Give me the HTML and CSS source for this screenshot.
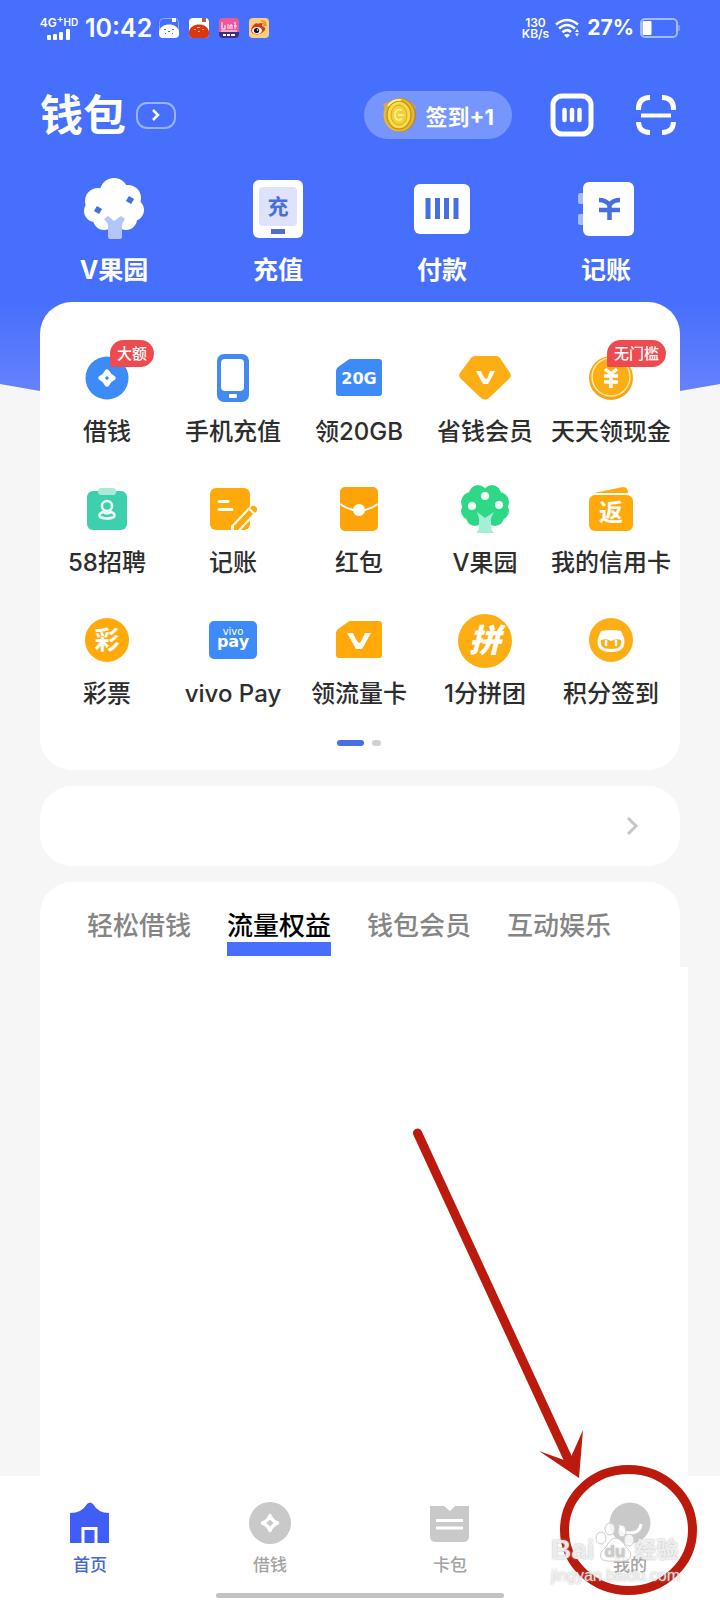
FILE: index.html
```html
<!DOCTYPE html>
<html lang="zh-CN">
<head>
<meta charset="utf-8">
<meta name="viewport" content="width=device-width, initial-scale=1">
<title>钱包</title>
<link rel="stylesheet" href="styles.css">
</head>
<body>
<div class="page">
  <div class="status">
    <div class="status-group">
      <div class="carrier">
        <span class="carrier-name">4G<sup>+</sup><small>HD</small></span>
        <svg width="24" height="11" viewBox="0 0 24 11" fill="#fff"><rect y="6" width="4" height="5" rx="1"/><rect x="6" y="5" width="4" height="6" rx="1"/><rect x="12" y="3" width="4" height="8" rx="1"/><rect x="19" width="4" height="11" rx="1"/></svg>
      </div>
      <span class="clock">10:42</span>
      <div class="app-icons">
        <svg width="20" height="20" viewBox="0 0 20 20"><rect x=".5" y=".5" width="19" height="19" rx="4" fill="#466ffe" stroke="#8fa8ff"/><path d="M13 0h4v4h-4z" fill="#fff"/><path d="M0 14C1 4 19 4 20 14v2q0 4-4 4H4q-4 0-4-4z" fill="#fff"/><g fill="#5c6a8a"><rect x="5" y="11" width="2" height="1"/><rect x="9" y="13" width="2" height="1"/><rect x="13" y="11" width="2" height="1"/><rect x="6" y="15" width="1" height="1"/><rect x="13" y="15" width="1" height="1"/></g></svg>
        <svg width="20" height="20" viewBox="0 0 20 20"><rect width="20" height="20" rx="4" fill="#fff"/><path d="M13 0h4v4h-4z" fill="#a5654f"/><path d="M0 14C1 4 19 4 20 14v2q0 4-4 4H4q-4 0-4-4z" fill="#d93614"/><g fill="#ffc07a"><rect x="5" y="11" width="2" height="1"/><rect x="9" y="13" width="2" height="1"/><rect x="13" y="11" width="2" height="1"/><rect x="8" y="9" width="3" height="1"/></g></svg>
        <svg width="20" height="20" viewBox="0 0 20 20"><rect width="20" height="20" rx="4" fill="#ee5799"/><path d="M0 14h20v2q0 4-4 4H4q-4 0-4-4z" fill="#3b2f83"/><path d="M3 4v7h3V7M9 6v5M11 11V7h2v4M16 4v7M15 8h3M2 13h16" stroke="#fff" fill="none"/><path d="M4 17h3m1 0h3m1 0h4" stroke="#fff" stroke-width="2"/></svg>
        <svg width="20" height="20" viewBox="0 0 20 20"><rect width="20" height="20" rx="4" fill="#fbd07c"/><path d="M2 12C3 7 8 4 9 6c3-2 5-1 4 2 4 1 4 4 1 6-4 4-12 3-12-2z" fill="#d63b20"/><ellipse cx="8" cy="12.500" rx="5" ry="3.500" fill="#fff"/><circle cx="7.500" cy="12.500" r="2.600" fill="#17110f"/><circle cx="8.500" cy="12" r=".8" fill="#fff"/><path d="M12 3q5-1 5 5M13 5q2.500 0 2.500 3" stroke="#f08a1d" fill="none" stroke-width="1.400"/></svg>
      </div>
    </div>
    <div class="status-group status-right">
      <span class="speed">130<br>KB/s</span>
      <svg width="26" height="20" viewBox="0 0 26 20" fill="none" stroke="#fff" stroke-width="2.600"><path d="M1 6.500Q12 -2.500 23 6.500M4 10.500Q12 3.500 20 10.500M7.500 14.200Q12 10 16 14"/><path d="M9 17q3-2 6 0l-3 3z" fill="#fff" stroke="none"/><path d="M20 14l2-3 2 3zM20 15.500h4l-2 3z" fill="#fff" stroke="none"/></svg>
      <span class="percent">27%</span>
      <svg width="40" height="20" viewBox="0 0 40 20"><rect x="1" y="1" width="36" height="18" rx="4" fill="none" stroke="#a4baff" stroke-width="2"/><rect x="2.500" y="3" width="9" height="14" rx="1" fill="#fff"/><path d="M39 7v6" stroke="#8aa4ff" stroke-width="1.500"/></svg>
    </div>
  </div>

  <header class="header">
    <h1>钱包</h1>
    <button class="switch" aria-label="切换"><svg width="10" height="12" viewBox="0 0 10 12"><path d="M2 1l5 5-5 5" fill="none" stroke="#fff" stroke-width="2.500"/></svg></button>
    <button class="checkin">
      <svg width="36" height="36" viewBox="0 0 36 36"><path d="M1 7l6-2 22 0 5 5-3 8H5z" fill="#d9a93a"/><ellipse cx="18" cy="18" rx="16" ry="17" fill="#b98a24"/><ellipse cx="17" cy="18" rx="15.500" ry="16.500" fill="#e8b930"/><ellipse cx="17" cy="18" rx="12" ry="14" fill="#f7dd4b" stroke="#c79520" stroke-width="1.500"/><ellipse cx="17" cy="18" rx="8" ry="10" fill="#f4cf3a" stroke="#d7a928"/><path d="M20 13q-7-2-7 5t7 4M16 18h6" fill="none" stroke="#fff27c" stroke-width="2"/><path d="M6 9q5-7 13-6" fill="none" stroke="#fff5a0" stroke-width="1.500"/></svg>
      <span>签到+1</span>
    </button>
    <button class="tool" aria-label="卡片"><svg width="44" height="44" viewBox="0 0 44 44" fill="none" stroke="#fff"><rect x="3" y="3" width="38" height="38" rx="9" stroke-width="5"/><path d="M14.500 17v10M22 17v10M29.500 17v10" stroke-width="4.500" stroke-linecap="round"/></svg></button>
    <button class="tool tool-scan" aria-label="扫一扫"><svg width="40" height="40" viewBox="0 0 40 40" fill="none" stroke="#fff"><path d="M2.500 15v-1Q2.500 2.500 14 2.500M26 2.500Q37.500 2.500 37.500 14v1M2.500 27Q3 37.500 14 37.500M26 37.500Q37 37.500 37.500 27" stroke-width="5"/><path d="M5 20.500h30" stroke-width="4"/></svg></button>
  </header>

  <nav class="quick">
    <a href="#"><span class="quick-icon"><svg width="60" height="62" viewBox="0 0 60 62"><g fill="#fff"><circle cx="30" cy="14" r="14"/><circle cx="14" cy="23" r="13"/><circle cx="44" cy="20" r="13"/><circle cx="11" cy="33" r="11"/><circle cx="49" cy="32" r="11"/><circle cx="20" cy="41" r="11"/><circle cx="42" cy="41" r="11"/><circle cx="30" cy="30" r="18"/></g><path d="M20 41l4-3 6 5 7-5 4 3-3 5v13q0 2-2 2H26q-2 0-2-2V46z" fill="#b4c5fc"/><rect x="11" y="29" width="6" height="6" transform="rotate(30 14 32)" fill="#466fe0"/><rect x="43" y="19" width="6" height="6" transform="rotate(30 46 22)" fill="#466fe0"/></svg></span>V果园</a>
    <a href="#"><span class="quick-icon"><svg width="52" height="58" viewBox="0 0 52 58"><rect x="1" width="50" height="58" rx="6" fill="#fff"/><rect x="7" y="7" width="38" height="39" rx="4" fill="#dfe2fc"/><text x="26" y="34" class="glyph" font-size="21" fill="#466fe0">充</text><rect x="19" y="49" width="14" height="5" fill="#4c6fd6"/></svg></span>充值</a>
    <a href="#"><span class="quick-icon"><svg width="56" height="50" viewBox="0 0 56 50"><rect width="56" height="50" rx="6" fill="#fff"/><path d="M14 14v21M23.500 14v21M32.500 14v21M42 14v21" stroke="#466fe0" stroke-width="5"/></svg></span>付款</a>
    <a href="#"><span class="quick-icon"><svg width="56" height="54" viewBox="0 0 56 54"><rect y="11" width="10" height="11" rx="2" fill="#a6bbfd"/><rect y="32" width="10" height="11" rx="2" fill="#a6bbfd"/><rect x="5" width="51" height="54" rx="6" fill="#fff"/><path d="M21 18q7 0 10.500 5Q35 18 42 18M31.500 22v16M21 28h21" fill="none" stroke="#466fe0" stroke-width="4.500"/></svg></span>记账</a>
  </nav>

  <main class="content">
    <section class="card services">
      <div class="grid">
        <a href="#"><span class="icon"><svg width="44" height="44" viewBox="0 0 44 44"><circle cx="22" cy="22" r="21.500" fill="#3c8bf8"/><path d="M22 15.500q2 4.500 6.500 6.500q-4.500 2-6.500 6.500q-2-4.500-6.500-6.500q4.500-2 6.500-6.500z" fill="none" stroke="#fff" stroke-width="4.500" stroke-linejoin="round"/></svg><em class="badge">大额</em></span>借钱</a>
        <a href="#"><span class="icon"><svg width="34" height="48" viewBox="0 0 34 48"><rect x="1" width="32" height="48" rx="7" fill="#438af0"/><rect x="5" y="5" width="23" height="32" rx="4" fill="#fff"/><rect x="13" y="40" width="8" height="4" rx="1" fill="#fff"/></svg></span>手机充值</a>
        <a href="#"><span class="icon"><svg width="46" height="38" viewBox="0 0 46 38"><path d="M0 12Q0 10 2 8L12 1Q13 0 15 0H43q3 0 3 3V34q0 3-3 3H3q-3 0-3-3z" fill="#3c8bf8"/><text x="23" y="25" class="wide" font-size="16" fill="#fff">20G</text></svg></span>领20GB</a>
        <a href="#"><span class="icon"><svg width="52" height="44" viewBox="0 0 52 44"><path d="M12 2q2-2 4-2h21q2 0 4 2l10 15q2 3-1 6L30 42q-4 3-8 0L2 23q-3-3-1-6z" fill="#fdae15"/><path d="M17 15h5q3 8 6 8l3-8h5l-7 13h-5z" fill="#fff"/></svg></span>省钱会员</a>
        <a href="#"><span class="icon"><svg width="44" height="44" viewBox="0 0 44 44"><circle cx="22" cy="22" r="22" fill="#f5a51b"/><circle cx="22" cy="21" r="19" fill="#fdae15" stroke="#ffe9a0" stroke-width="1.500"/><path d="M16 13l6 5 6-5M22 18v14M15 20h14M15 26h14" fill="none" stroke="#fff" stroke-width="3.500"/></svg><em class="badge badge-long">无门槛</em></span>天天领现金</a>

        <a href="#"><span class="icon"><svg width="42" height="42" viewBox="0 0 42 42"><rect x="1" y="3" width="40" height="39" rx="6" fill="#3ecfae"/><rect x="12" width="18" height="7" rx="3" fill="#a8ecd8"/><g fill="none" stroke="#f2fffb" stroke-width="2.500"><circle cx="21" cy="18" r="5"/><path d="M17 24q-5 2-3 5 7 3 14 0 2-3-3-5-4 3-8 0z"/></g></svg></span>58招聘</a>
        <a href="#"><span class="icon"><svg width="48" height="44" viewBox="0 0 48 44"><rect x="1" y="1" width="40" height="42" rx="6" fill="#ffa90a"/><path d="M10 14.500h9M10 22.500h13" stroke="#fff" stroke-width="3" stroke-linecap="round"/><path d="M22 45v-6L42 18l7 7-19 20z" fill="#fff"/><path d="M25 43v-4l15-16 4 4-15 16zM41 21q3-4 6-1t-1 6z" fill="#ffa90a"/></svg></span>记账</a>
        <a href="#"><span class="icon"><svg width="40" height="44" viewBox="0 0 40 44"><rect x="1" width="38" height="44" rx="5" fill="#ffa408"/><path d="M1 17Q20 30 39 17" fill="none" stroke="#fff" stroke-width="2"/><circle cx="20" cy="23" r="6" fill="#fff"/></svg></span>红包</a>
        <a href="#"><span class="icon"><svg width="50" height="48" viewBox="0 0 50 48"><g fill="#2fd885"><circle cx="18" cy="9" r="9"/><circle cx="32" cy="9" r="9"/><circle cx="11" cy="17" r="10"/><circle cx="39" cy="17" r="10"/><circle cx="10" cy="26" r="9"/><circle cx="40" cy="26" r="9"/><circle cx="15" cy="32" r="9"/><circle cx="35" cy="32" r="9"/><circle cx="25" cy="22" r="17"/></g><path d="M17 27l8 6 9-6-3 6v7q0 5 3 8H16q4-4 3-8v-7z" fill="#a5efd8"/><g fill="#f2fff6"><circle cx="25" cy="11" r="4"/><circle cx="12" cy="21" r="4"/><circle cx="39" cy="20" r="4"/></g></svg></span>V果园</a>
        <a href="#"><span class="icon"><svg width="44" height="44" viewBox="0 0 44 44"><path d="M5 6L34 0q5 0 5 6z" fill="#ffa90a"/><rect y="8" width="44" height="36" rx="6" fill="#ffa90a"/><text x="22" y="34" class="glyph" font-size="24" fill="#fff">返</text></svg></span>我的信用卡</a>

        <a href="#"><span class="icon"><svg width="44" height="44" viewBox="0 0 44 44"><circle cx="22" cy="22" r="22" fill="#ffa90a"/><text x="22" y="31" class="glyph" font-size="25" fill="#fff">彩</text></svg></span>彩票</a>
        <a href="#"><span class="icon"><svg width="48" height="38" viewBox="0 0 48 38"><rect width="48" height="38" rx="5" fill="#3c8bf8"/><text x="24" y="14" class="vivo" font-size="10" fill="#fff">vivo</text><text x="24" y="26" class="wide" font-size="16" fill="#fff">pay</text></svg></span>vivo Pay</a>
        <a href="#"><span class="icon"><svg width="46" height="38" viewBox="0 0 46 38"><path d="M0 12Q0 10 2 8L12 1Q13 0 15 0H43q3 0 3 3V34q0 3-3 3H3q-3 0-3-3z" fill="#ffa90a"/><path d="M11 12h6q4 10 7 10l5-10h6l-9 16h-6z" fill="#fff"/></svg></span>领流量卡</a>
        <a href="#"><span class="icon"><svg width="54" height="54" viewBox="0 0 54 54"><circle cx="27" cy="27" r="27" fill="#fdae15"/><text x="27" y="38" class="glyph heavy" font-size="32" fill="#fff">拼</text></svg></span>1分拼团</a>
        <a href="#"><span class="icon"><svg width="44" height="44" viewBox="0 0 44 44"><circle cx="22" cy="22" r="22" fill="#fdae15"/><path d="M12 13q10-2 20 0l3 7q3 14-13 14T9 20z" fill="#fff"/><path d="M12 22q5-2 10 1 5-3 10-1 2 9-10 9t-10-9z" fill="#fdae15"/><path d="M17 23v4M27 23v4" stroke="#fff" stroke-width="2.500" stroke-linecap="round"/></svg></span>积分签到</a>
      </div>
      <div class="pager"><i class="on"></i><i></i></div>
    </section>

    <a class="card notice" href="#" aria-label="更多"><svg width="14" height="20" viewBox="0 0 14 20"><path d="M2 2l8 8-8 8" fill="none" stroke="#c6c6c6" stroke-width="3"/></svg></a>

    <section class="card feed">
      <div class="tabs">
        <button>轻松借钱</button>
        <button class="active">流量权益</button>
        <button>钱包会员</button>
        <button>互动娱乐</button>
      </div>
      <div class="feed-body"></div>
    </section>
  </main>

  <footer class="tabbar">
    <nav class="tabbar-items">
      <a class="current" href="#"><svg width="42" height="42" viewBox="0 0 42 42"><path d="M1 11Q13 11 18 2q3-3 6 0 5 9 16 9V41H1z" fill="#405df5"/><path d="M14 41V26.500H27V41" fill="none" stroke="#fff" stroke-width="3"/></svg>首页</a>
      <a href="#"><svg width="42" height="42" viewBox="0 0 42 42"><circle cx="21" cy="21" r="21" fill="#c9c9c9"/><path d="M21 13.500q2 5.500 7.500 7.500q-5.500 2-7.500 7.500q-2-5.500-7.500-7.500q5.500-2 7.500-7.500z" fill="none" stroke="#fff" stroke-width="3.500" stroke-linejoin="round"/></svg>借钱</a>
      <a href="#"><svg width="42" height="42" viewBox="0 0 42 42"><path d="M1 4H15L21 9l5-5H40V34q0 6-6 6H7q-6 0-6-6z" fill="#c9c9c9"/><path d="M7 18.500h27M7 26h27" stroke="#fff" stroke-width="3"/></svg>卡包</a>
      <a href="#"><svg width="42" height="42" viewBox="0 0 42 42"><circle cx="21" cy="21" r="20.500" fill="#c9c9c9"/><path d="M11 23q2 8 10 8 10 0 11-9" fill="none" stroke="#fff" stroke-width="3"/></svg>我的</a>
    </nav>
    <div class="home-line"></div>
    <svg class="mark" width="340" height="480" viewBox="0 0 340 480" aria-hidden="true">
      <path d="M37.500 13L189 341" stroke="#bb1a0d" stroke-width="9" stroke-linecap="round"/>
      <path d="M159 331l25 9 7-3 12-27-4 48z" fill="#bb1a0d"/>
      <ellipse cx="248.500" cy="410" rx="64" ry="60.500" fill="none" stroke="#bb1a0d" stroke-width="9"/>
    </svg>
    <div class="watermark" aria-hidden="true">
      <div class="wm-name"><span>Bai</span><svg width="40" height="40" viewBox="0 0 40 40"><g fill="#fff" fill-opacity=".8" stroke="#ccc" stroke-width="1"><ellipse cx="6" cy="16" rx="5" ry="6"/><ellipse cx="15" cy="7" rx="5" ry="6"/><ellipse cx="27" cy="9" rx="4" ry="6"/><ellipse cx="34" cy="18" rx="5" ry="6"/><path d="M20 16Q26 16 31 25q7 6 4 11-2 4-15 3-12 1-14-3-2-6 5-11 5-9 9-9z"/></g><text x="20" y="35" class="wm-du" font-size="17">du</text></svg><span class="wm-cn">经验</span></div>
      <div class="wm-url">jingyan.baidu.com</div>
    </div>
  </footer>
</div>
</body>
</html>
```

FILE: styles.css
```css
* { box-sizing: border-box; }

body {
  margin: 0;
  background: #f6f6f6;
  color: #2d2d2d;
  font-family: Inter, "Noto Sans CJK SC", sans-serif;
}

a { color: inherit; text-decoration: none; }
button { margin: 0; padding: 0; border: 0; background: none; color: inherit; font: inherit; }
svg { display: block; flex: none; }
text { text-anchor: middle; }

.page {
  position: relative;
  isolation: isolate;
  display: flex;
  flex-direction: column;
  min-height: 100vh;
  overflow: hidden;
}

.page::before {
  content: "";
  position: absolute;
  z-index: -1;
  top: 0;
  left: 0;
  right: 0;
  height: 392px;
  background: linear-gradient(#466ffe 300px, #6681fc 392px);
  clip-path: polygon(0 0, 100% 0, 100% 384px, calc(100% - 40px) 391px, 40px 391px, 0 384px);
}

.status {
  display: flex;
  justify-content: space-between;
  align-items: center;
  height: 56px;
  padding: 0 40px;
  color: #fff;
}
.status-group { display: flex; align-items: center; gap: 7px; }
.status-right { gap: 6px; }
.carrier { display: flex; flex-direction: column; align-items: center; width: 38px; }
.carrier-name { font-size: 12px; font-weight: 600; line-height: 12px; white-space: nowrap; }
.carrier-name sup { font-size: 10px; line-height: 0; }
.carrier-name small { font-size: 10px; vertical-align: 1px; }
.clock { font-size: 25px; font-weight: 600; line-height: 32px; }
.app-icons { display: flex; gap: 10px; }
.speed { font-size: 12px; font-weight: 600; line-height: 11px; text-align: center; }
.percent { font-size: 21px; font-weight: 700; line-height: 32px; }

.header {
  display: flex;
  align-items: center;
  margin-top: 35px;
  padding: 0 44px 0 40px;
  height: 48px;
  color: #fff;
}
.header h1 { margin: 0; font-size: 43px; font-weight: 700; line-height: 48px; }
.switch {
  display: grid;
  place-items: center;
  width: 40px;
  height: 27px;
  margin-left: 10px;
  border: 2px solid #9db3ff;
  border-radius: 11px;
}
.checkin {
  display: flex;
  align-items: center;
  gap: 8px;
  height: 48px;
  margin-left: auto;
  padding: 0 18px;
  border-radius: 24px;
  background: #7695ff;
  font-size: 22px;
  font-weight: 700;
}
.tool { margin-left: 38px; }
.tool-scan { margin-left: 42px; }

.quick {
  display: grid;
  grid-template-columns: repeat(4, 1fr);
  margin-top: 39px;
  padding: 0 32px;
  color: #fff;
  font-size: 25px;
  font-weight: 700;
  line-height: 32px;
  text-align: center;
}
.quick-icon { display: grid; place-items: center; height: 64px; padding-bottom: 2px; margin-bottom: 12px; }
.glyph { font-family: "Noto Sans CJK SC", sans-serif; font-weight: 700; }
.heavy { font-weight: 900; font-style: italic; }
.wide { font-family: "DejaVu Sans", sans-serif; font-weight: 700; }
.vivo { font-family: "DejaVu Sans", sans-serif; }

.content {
  display: flex;
  flex: 1;
  flex-direction: column;
  gap: 16px;
  margin-top: 16px;
  padding: 0 40px;
}
.card { border-radius: 32px; background: #fff; }
.services { padding: 50px 6px 24px 4px; }
.grid {
  display: grid;
  grid-template-columns: repeat(5, 1fr);
  row-gap: 35px;
  font-size: 24px;
  font-weight: 500;
  line-height: 32px;
  text-align: center;
  white-space: nowrap;
}
.icon { position: relative; display: grid; place-items: center; height: 56px; padding-bottom: 4px; margin-bottom: 8px; }
.badge {
  position: absolute;
  top: -12px;
  left: calc(50% + 3px);
  padding: 0 7px;
  border-radius: 14px 14px 14px 2px;
  background: #ee4b50;
  color: #fff;
  font-size: 15px;
  font-style: normal;
  line-height: 27px;
}
.badge-long { left: calc(50% - 4px); }

.pager { display: flex; justify-content: center; gap: 8px; margin-top: 30px; }
.pager i { width: 9px; height: 6px; border-radius: 3px; background: #d2d2d2; }
.pager .on { width: 27px; background: #466fe8; }

.notice { display: flex; align-items: center; justify-content: flex-end; height: 80px; padding-right: 40px; }

.feed { display: flex; flex: 1; flex-direction: column; border-radius: 32px 32px 0 0; }
.tabs { display: flex; gap: 36px; height: 85px; padding: 28px 47px 0; }
.tabs button {
  height: 46px;
  border-bottom: 14px solid transparent;
  color: #858585;
  font-size: 26px;
  font-weight: 500;
  line-height: 32px;
  white-space: nowrap;
}
.tabs .active { border-color: #466ffe; color: #000; }
.feed-body { flex: 1; margin-right: -8px; background: #fff; }

.tabbar { position: relative; padding-bottom: 2px; background: #fff; }
.tabbar-items { display: grid; grid-template-columns: repeat(4, 1fr); padding-top: 26px; }
.tabbar-items a {
  display: flex;
  flex-direction: column;
  align-items: center;
  gap: 8px;
  color: #a3a3a3;
  font-size: 17px;
  font-weight: 500;
  line-height: 26px;
}
.tabbar-items .current { color: #4668d0; }
.home-line { width: 40%; height: 5px; margin: 15px auto 0; border-radius: 3px; background: #c2c2c2; }

.mark { position: absolute; right: 0; bottom: 0; fill: none; }
.watermark {
  position: absolute;
  right: 41px;
  bottom: 14px;
  width: 128px;
  color: rgba(255, 255, 255, 0.75);
  font-family: "Liberation Sans", "Noto Sans CJK SC", sans-serif;
  text-shadow: 0 0 2px #aaa;
}
.wm-name { display: flex; align-items: flex-end; font-size: 28px; font-weight: 700; line-height: 24px; }
.wm-cn { font-size: 22px; }
.wm-du { fill: #ccc; font-weight: 700; }
.wm-url { margin-top: 4px; font-size: 16px; line-height: 20px; }
```
